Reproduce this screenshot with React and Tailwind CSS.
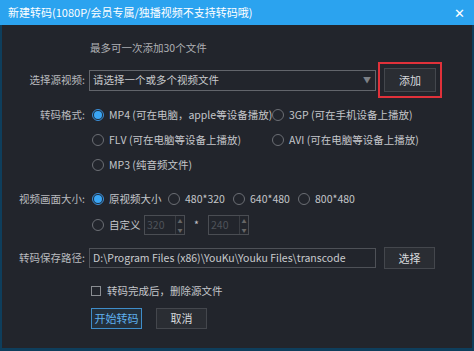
import React from "react";

const font = { fontFamily: '"Noto Sans CJK SC", "Noto Sans", sans-serif' };

function Radio({ checked }) {
  return checked ? (
    <span className="w-[12px] h-[12px] rounded-full border border-[#3b8fd9] bg-[#1d2a38] flex items-center justify-center shrink-0">
      <span className="w-[8px] h-[8px] rounded-full bg-[#3aa6f5]" />
    </span>
  ) : (
    <span className="w-[12px] h-[12px] rounded-full border border-[#6b6e74] shrink-0" />
  );
}

function Opt({ checked, children, w }) {
  return (
    <div className={`flex items-center gap-[5px] shrink-0 ${w || ""}`}>
      <Radio checked={checked} />
      <span className="text-[#c4c6ca] whitespace-nowrap">{children}</span>
    </div>
  );
}

function Spin({ v }) {
  return (
    <div className="w-[41px] h-[20px] border border-[#4a4d53] flex items-center shrink-0">
      <span className="flex-1 pl-[2px] text-[#4f535a] text-[10.5px]">{v}</span>
      <div className="w-[9px] h-full flex flex-col border-l border-[#3a3d43]">
        <span className="flex-1 text-[5px] leading-[9px] text-[#666] text-center">▲</span>
        <span className="flex-1 text-[5px] leading-[9px] text-[#666] text-center">▼</span>
      </div>
    </div>
  );
}

export default function App() {
  return (
    <div className="w-[474px] h-[351px] bg-[#0e3e5c] overflow-hidden flex flex-col text-[10.5px] whitespace-nowrap" style={font}>
      <div className="h-[25px] bg-[#2ba3ef] flex items-center justify-between px-[8px] shrink-0">
        <span className="text-white text-[11px]">新建转码(1080P/会员专属/独播视频不支持转码哦)</span>
        <span className="text-white text-[13px] leading-none mr-[1px]">✕</span>
      </div>
      <div className="flex-1 mx-[2px] mb-[3px] bg-[#22252c] flex flex-col">
        <div className="pl-[88px] pt-[14px] text-[#aeb0b4] leading-[17px]">最多可一次添加30个文件</div>

        <div className="flex items-center mt-[6px]">
          <div className="w-[84px] text-right text-[#b9bbbf] pr-[1px]">选择源视频:</div>
          <div className="ml-[3px] w-[287px] h-[21px] border border-[#62656b] flex items-center px-[3px] justify-between">
            <span className="text-[#c8cacd]">请选择一个或多个视频文件</span>
            <span className="text-[#7d8086] text-[8px] mr-[1px]">▼</span>
          </div>
          <div className="ml-[2px] border-2 border-[#e0313a] p-[4px]">
            <div className="w-[52px] h-[24px] bg-[#2a2d33] border border-[#44474d] flex items-center justify-center text-[#d8dadd] text-[11px]">添加</div>
          </div>
        </div>

        <div className="flex mt-[7px]">
          <div className="w-[84px] text-right text-[#b9bbbf] pr-[1px] leading-[20px]">转码格式:</div>
          <div className="ml-[6px] flex flex-col gap-[5px]">
            <div className="flex items-center h-[20px]">
              <Opt checked w="w-[180px]">MP4 (可在电脑，apple等设备播放)</Opt>
              <Opt>3GP (可在手机设备上播放)</Opt>
            </div>
            <div className="flex items-center h-[20px]">
              <Opt w="w-[180px]">FLV (可在电脑等设备上播放)</Opt>
              <Opt>AVI (可在电脑等设备上播放)</Opt>
            </div>
            <div className="flex items-center h-[20px]">
              <Opt>MP3 (纯音频文件)</Opt>
            </div>
          </div>
        </div>

        <div className="flex mt-[14px]">
          <div className="w-[84px] text-right text-[#b9bbbf] pr-[1px] leading-[20px]">视频画面大小:</div>
          <div className="ml-[6px] flex flex-col gap-[5px]">
            <div className="flex items-center h-[20px]">
              <Opt checked w="w-[76px]">原视频大小</Opt>
              <Opt w="w-[65px]">480*320</Opt>
              <Opt w="w-[65px]">640*480</Opt>
              <Opt>800*480</Opt>
            </div>
            <div className="flex items-center h-[21px]">
              <Opt w="w-[52px]">自定义</Opt>
              <Spin v="320" />
              <span className="w-[23px] text-center text-[#c4c6ca]">*</span>
              <Spin v="240" />
            </div>
          </div>
        </div>

        <div className="flex items-center mt-[12px]">
          <div className="w-[84px] text-right text-[#b9bbbf] pr-[1px]">转码保存路径:</div>
          <div className="ml-[3px] w-[287px] h-[20px] border border-[#4e5157] flex items-center px-[3px]">
            <span className="text-[#c8cacd]">D:\Program Files (x86)\YouKu\Youku Files\transcode</span>
          </div>
          <div className="ml-[8px] w-[51px] h-[22px] bg-[#2a2d33] border border-[#44474d] flex items-center justify-center text-[#d8dadd] text-[11px]">选择</div>
        </div>

        <div className="flex items-center pl-[89px] mt-[14px] gap-[6px]">
          <span className="w-[10px] h-[10px] border border-[#8a8d92]" />
          <span className="text-[#c4c6ca]">转码完成后，删除源文件</span>
        </div>

        <div className="flex items-center pl-[89px] mt-[9px] gap-[14px]">
          <div className="w-[51px] h-[21px] bg-[#23303c] border border-[#3f8dc9] flex items-center justify-center text-[#5fb1ee] text-[11px]">开始转码</div>
          <div className="w-[51px] h-[21px] bg-[#2a2d33] border border-[#44474d] flex items-center justify-center text-[#d8dadd] text-[11px]">取消</div>
        </div>
      </div>
    </div>
  );
}
